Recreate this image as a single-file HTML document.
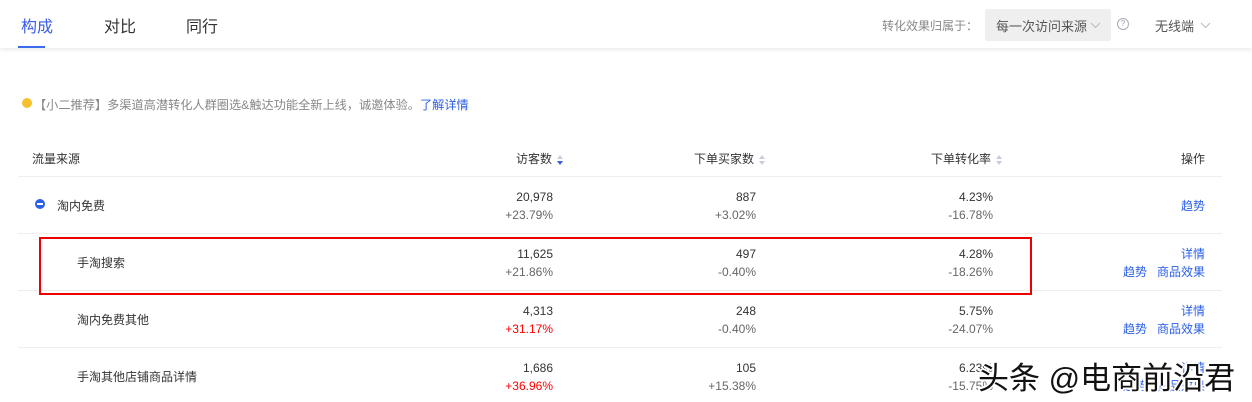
<!DOCTYPE html>
<html><head><meta charset="utf-8"><style>
body{margin:0;width:1252px;height:402px;overflow:hidden;background:#fff;font-family:"Liberation Sans","Noto Sans CJK SC",sans-serif;position:relative;color:#333}
.a{position:absolute;white-space:nowrap}
.hdr{position:absolute;left:0;top:0;width:1252px;height:48px;background:#fff;box-shadow:0 2px 4px rgba(0,0,0,.08)}
.tab{font-size:16px;top:13px;color:#333}
.r{text-align:right;font-size:12px;line-height:18px}
.g{color:#666}.red{color:#f00}.blue{color:#2a5fe8}
.line{position:absolute;left:18px;width:1204px;height:1px;background:#eee}
.sort{display:inline-block;width:6px;vertical-align:middle;margin-left:5px}
</style></head><body>
<div class="hdr"></div>
<div class="a tab" style="left:21px;color:#3b5ce8">构成</div>
<div class="a" style="left:18px;top:46px;width:27px;height:2px;background:#3b6cf0"></div>
<div class="a tab" style="left:104px">对比</div>
<div class="a tab" style="left:186px">同行</div>
<div class="a g" style="left:882px;top:17px;font-size:12px;color:#888">转化效果归属于：</div>
<div class="a" style="left:985px;top:9px;width:126px;height:32px;background:#efefef;border-radius:2px"></div>
<div class="a" style="left:996px;top:16px;font-size:13px;color:#555">每一次访问来源</div>
<svg class="a" style="left:1090px;top:22px" width="11" height="7" viewBox="0 0 11 7"><path d="M1 1L5.5 5.5L10 1" fill="none" stroke="#bbb" stroke-width="1"/></svg>
<div class="a" style="left:1117px;top:18px;width:10px;height:10px;border:1px solid #aab;border-radius:50%;font-size:8px;line-height:10px;text-align:center;color:#99a">?</div>
<div class="a" style="left:1155px;top:16px;font-size:13px;color:#555">无线端</div>
<svg class="a" style="left:1200px;top:22px" width="11" height="7" viewBox="0 0 11 7"><path d="M1 1L5.5 5.5L10 1" fill="none" stroke="#bbb" stroke-width="1"/></svg>

<div class="a" style="left:22px;top:98px;width:10px;height:10px;border-radius:50%;background:#f5c12e"></div>
<div class="a" style="left:34px;top:95px;font-size:12.2px;color:#888">【小二推荐】多渠道高潜转化人群圈选&amp;触达功能全新上线，诚邀体验。<span class="blue">了解详情</span></div>

<div class="a" style="left:32px;top:150px;font-size:12px">流量来源</div>
<div class="a" style="left:516px;top:150px;font-size:12px">访客数<svg class="sort" height="10" viewBox="0 0 6 10"><path d="M0 4L3 0L6 4Z" fill="#ccd"/><path d="M0 6L3 10L6 6Z" fill="#3b5ce8"/></svg></div>
<div class="a" style="left:694px;top:150px;font-size:12px">下单买家数<svg class="sort" height="10" viewBox="0 0 6 10"><path d="M0 4L3 0L6 4Z" fill="#ccd"/><path d="M0 6L3 10L6 6Z" fill="#ccd"/></svg></div>
<div class="a" style="left:931px;top:150px;font-size:12px">下单转化率<svg class="sort" height="10" viewBox="0 0 6 10"><path d="M0 4L3 0L6 4Z" fill="#ccd"/><path d="M0 6L3 10L6 6Z" fill="#ccd"/></svg></div>
<div class="a" style="right:47px;top:150px;font-size:12px">操作</div>
<div class="line" style="top:176px"></div>
<div class="line" style="top:233px"></div>
<div class="line" style="top:290px"></div>
<div class="line" style="top:347px"></div>

<div class="a" style="left:35px;top:199px;width:10px;height:10px;border-radius:50%;background:#2a5fe8"><div style="position:absolute;left:2px;top:4px;width:6px;height:2px;background:#fff"></div></div>
<div class="a" style="left:57px;top:197px;font-size:12px">淘内免费</div>
<div class="a r" style="right:699px;top:188px">20,978<br><span class="g">+23.79%</span></div>
<div class="a r" style="right:496px;top:188px">887<br><span class="g">+3.02%</span></div>
<div class="a r" style="right:259px;top:188px">4.23%<br><span class="g">-16.78%</span></div>
<div class="a r blue" style="right:47px;top:197px">趋势</div>

<div class="a" style="left:77px;top:254px;font-size:12px">手淘搜索</div>
<div class="a r" style="right:699px;top:245px">11,625<br><span class="g">+21.86%</span></div>
<div class="a r" style="right:496px;top:245px">497<br><span class="g">-0.40%</span></div>
<div class="a r" style="right:259px;top:245px">4.28%<br><span class="g">-18.26%</span></div>
<div class="a r blue" style="right:47px;top:245px">详情<br>趋势&nbsp;&nbsp;&nbsp;商品效果</div>
<div class="a" style="left:39px;top:237px;width:989px;height:54px;border:2px solid #e00"></div>

<div class="a" style="left:77px;top:311px;font-size:12px">淘内免费其他</div>
<div class="a r" style="right:699px;top:302px">4,313<br><span class="red">+31.17%</span></div>
<div class="a r" style="right:496px;top:302px">248<br><span class="g">-0.40%</span></div>
<div class="a r" style="right:259px;top:302px">5.75%<br><span class="g">-24.07%</span></div>
<div class="a r blue" style="right:47px;top:302px">详情<br>趋势&nbsp;&nbsp;&nbsp;商品效果</div>

<div class="a" style="left:77px;top:368px;font-size:12px">手淘其他店铺商品详情</div>
<div class="a r" style="right:699px;top:359px">1,686<br><span class="red">+36.96%</span></div>
<div class="a r" style="right:496px;top:359px">105<br><span class="g">+15.38%</span></div>
<div class="a r" style="right:259px;top:359px">6.23%<br><span class="g">-15.75%</span></div>
<div class="a r blue" style="right:47px;top:359px">详情<br>趋势&nbsp;&nbsp;&nbsp;商品效果</div>

<div class="a" style="left:978px;top:353px;font-size:31px;color:#111;text-shadow:-2px 0 #fff,2px 0 #fff,0 2px #fff,0 -2px #fff,1px 1px #fff,-1px -1px #fff">头条 @电商前沿君</div>
</body></html>
